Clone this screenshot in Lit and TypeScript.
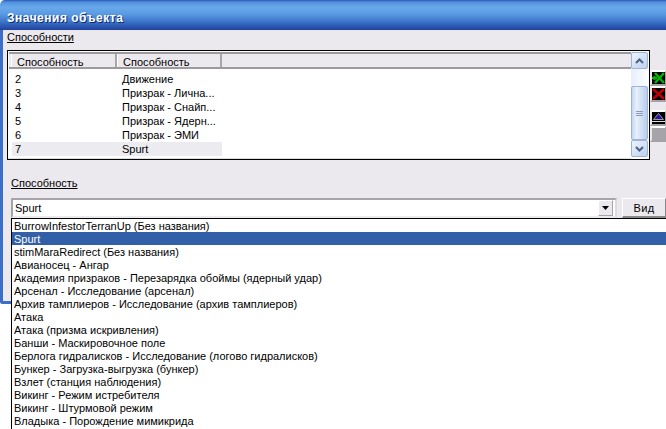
import { LitElement, html, css, svg } from "lit";
import { customElement } from "lit/decorators.js";

const rows = [["2","Движение"],["3","Призрак - Лична..."],["4","Призрак - Снайп..."],["5","Призрак - Ядерн..."],["6","Призрак - ЭМИ"],["7","Spurt"]];
const items = ["BurrowInfestorTerranUp (Без названия)","Spurt","stimMaraRedirect (Без названия)","Авианосец - Ангар","Академия призраков - Перезарядка обоймы (ядерный удар)","Арсенал - Исследование (арсенал)","Архив тамплиеров - Исследование (архив тамплиеров)","Атака","Атака (призма искривления)","Банши - Маскировочное поле","Берлога гидралисков - Исследование (логово гидралисков)","Бункер - Загрузка-выгрузка (бункер)","Взлет (станция наблюдения)","Викинг - Режим истребителя","Викинг - Штурмовой режим","Владыка - Порождение мимикрида"];

@customElement("app-root")
export class AppRoot extends LitElement {
  static styles = css`
    :host { display:block; width:666px; height:429px; overflow:hidden; position:relative; font:11px/13px "Liberation Sans",sans-serif; color:#000; background:#fff; }
    .title { height:30px; box-sizing:border-box; padding:11px 0 0 7px; color:#fff; font:700 12px/14px "Liberation Sans",sans-serif; letter-spacing:.5px; text-shadow:1px 1px 0 #0f2a70;
      background:linear-gradient(#2d56b8 0,#4f8fdc 2px,#69a9ea 7px,#5a9ae2 14px,#3a72c8 22px,#2448a4 29px,#1e3f96 30px); border-radius:5px 0 0 0; }
    .body { border-left:3px solid #3a6ec8; height:274px; box-sizing:border-box; padding:0 0 0 4px; background:#ece9ee; border-bottom:3px solid #3a6ec8; border-bottom-left-radius:3px; }
    u { display:block; text-decoration:underline; }
    .l1 { padding-top:1px; height:20px; box-sizing:border-box; }
    .group { display:flex; align-items:flex-start; }
    .list { width:643px; height:110px; box-sizing:border-box; border:1px solid #000; background:#fff; display:flex; flex:none; }
    .main { flex:1; min-width:0; padding:1px 0 0 1px; height:108px; box-sizing:border-box; border-bottom:1px solid #dcdcdc; }
    .head { display:flex; height:17px; box-sizing:border-box; background:#ece9ee; border-top:2px solid #9c9a9c; border-bottom:2px solid #9c9a9c; }
    .head div { box-sizing:border-box; padding:1px 0 0 5px; height:13px; line-height:14px; border-right:2px solid #a8a6a8; border-left:1px solid #fff; }
    .h1 { width:106px; margin-left:2px; }
    .h2 { width:105px; }
    .rows { padding-top:3px; }
    .row { display:flex; height:14px; line-height:14px; margin-left:3px; padding-left:3px; }
    .row.sel { background:#ececf0; width:210px; box-sizing:border-box; }
    .c1 { width:107px; flex:none; }
    .c2 { flex:1; }
    .sb { width:17px; margin-right:1px; display:flex; flex-direction:column; background:linear-gradient(90deg,#e6effd,#fdfdff); margin-top:1px; height:105px; }
    .sbtn { height:17px; box-sizing:border-box; border:1px solid #9db4d6; border-radius:2px; background:linear-gradient(135deg,#eef4fe,#bcd0ee); display:flex; align-items:center; justify-content:center; }
    .track { height:17px; }
    .thumb { height:54px; box-sizing:border-box; border:1px solid #9db4d6; border-radius:2px; background:linear-gradient(90deg,#c6d6f2,#e8f0fc 30%,#b8cdec); display:flex; align-items:center; justify-content:center; }
    .side { display:flex; flex-direction:column; margin-top:20px; }
    .tb { width:16px; height:16px; display:block; background:#000; border:2px solid #a4a2a4; border-right:1px solid #a4a2a4; box-sizing:border-box; border-top-color:#fff; border-left-color:#ece9ee; }
    .tb svg { display:block; }
    .gap { margin-top:8px; }
    .tb.blank { background:#a6a4a8; }
    .l2 { margin:17px 0 0 4px; height:15px; }
    .comborow { display:flex; margin:6px 0 0 4px; }
    .combo { width:606px; height:20px; box-sizing:border-box; border:2px solid #a6a4a8; border-bottom-color:#ece9ee; border-right-color:#dedcde; background:#fff; display:flex; align-items:center; padding-left:2px; justify-content:space-between; flex:none; }
    .arrow { width:15px; height:16px; box-sizing:border-box; background:#ece9ee; border:1px solid #a6a4a8; border-top-color:#fff; border-left-color:#fff; display:flex; align-items:center; justify-content:center; margin-right:2px; }
    .btn { width:44px; height:20px; margin-left:5px; box-sizing:border-box; background:#ece9ee; border:1px solid #fff; border-right-color:#8a888a; border-bottom:2px solid #8a888a; text-align:center; padding-top:3px; letter-spacing:.3px; flex:none; }
    .drop { position:absolute; left:11px; top:218px; right:0; height:220px; background:#fff; border:1px solid #000; border-right:0; border-bottom:0; }
    .item { height:13px; line-height:15px; padding-left:2px; white-space:nowrap; }
    .item.sel { background:#3260a8; color:#fff; }
  `;
  render() {
    const lines = svg`<path d="M-3.500 -2h7M-3.500 0h7M-3.500 2h7" stroke="#8a9ab8" />`;
    return html`
      <div class="title">Значения объекта</div>
      <div class="body">
        <u class="l1">Способности</u>
        <div class="group">
          <div class="list">
            <div class="main">
              <div class="head"><div class="h1">Способность</div><div class="h2">Способность</div></div>
              <div class="rows">${rows.map((r) => html`<div class="row ${r[0]==="7"?"sel":""}"><span class="c1">${r[0]}</span><span class="c2">${r[1]}</span></div>`)}</div>
            </div>
            <div class="sb">
              <div class="sbtn"><svg width="9" height="6" viewBox="0 0 9 6"><path d="M1 5L4.500 1.500L8 5" fill="none" stroke="#4d6185" stroke-width="2"/></svg></div>
              <div class="track"></div>
              <div class="thumb"><svg width="7" height="7" viewBox="-3.500 -3.500 7 7">${lines}</svg></div>
              <div class="sbtn"><svg width="9" height="6" viewBox="0 0 9 6"><path d="M1 1L4.500 4.500L8 1" fill="none" stroke="#4d6185" stroke-width="2"/></svg></div>
            </div>
          </div>
          <div class="side">
            <span class="tb"><svg width="13" height="12" viewBox="0 0 13 12"><path d="M3 1L12 11M12 1L3 11" stroke="#00b400" stroke-width="2.500"/><path d="M0 6h5M2.500 4v4" stroke="#00b400" stroke-width="2"/></svg></span>
            <span class="tb"><svg width="13" height="12" viewBox="0 0 13 12"><path d="M1 1L12 11M12 1L1 11" stroke="#c00000" stroke-width="2.500"/></svg></span>
            <span class="tb gap"><svg width="13" height="12" viewBox="0 0 13 12"><path d="M1.500 7.500L6.500 1.500L11.500 7.500Z" fill="#3010a0" stroke="#9a9a9a"/><path d="M0 9.500h13" stroke="#ddd"/></svg></span>
            <span class="tb blank"></span>
          </div>
        </div>
        <u class="l2">Способность</u>
        <div class="comborow">
          <div class="combo"><span>Spurt</span><span class="arrow"><svg width="7" height="4" viewBox="0 0 7 4"><path d="M0 0h7L3.500 4Z"/></svg></span></div>
          <div class="btn">Вид</div>
        </div>
      </div>
      <div class="drop">${items.map((t,i)=>html`<div class="item ${i===1?"sel":""}">${t}</div>`)}</div>`;
  }
}
